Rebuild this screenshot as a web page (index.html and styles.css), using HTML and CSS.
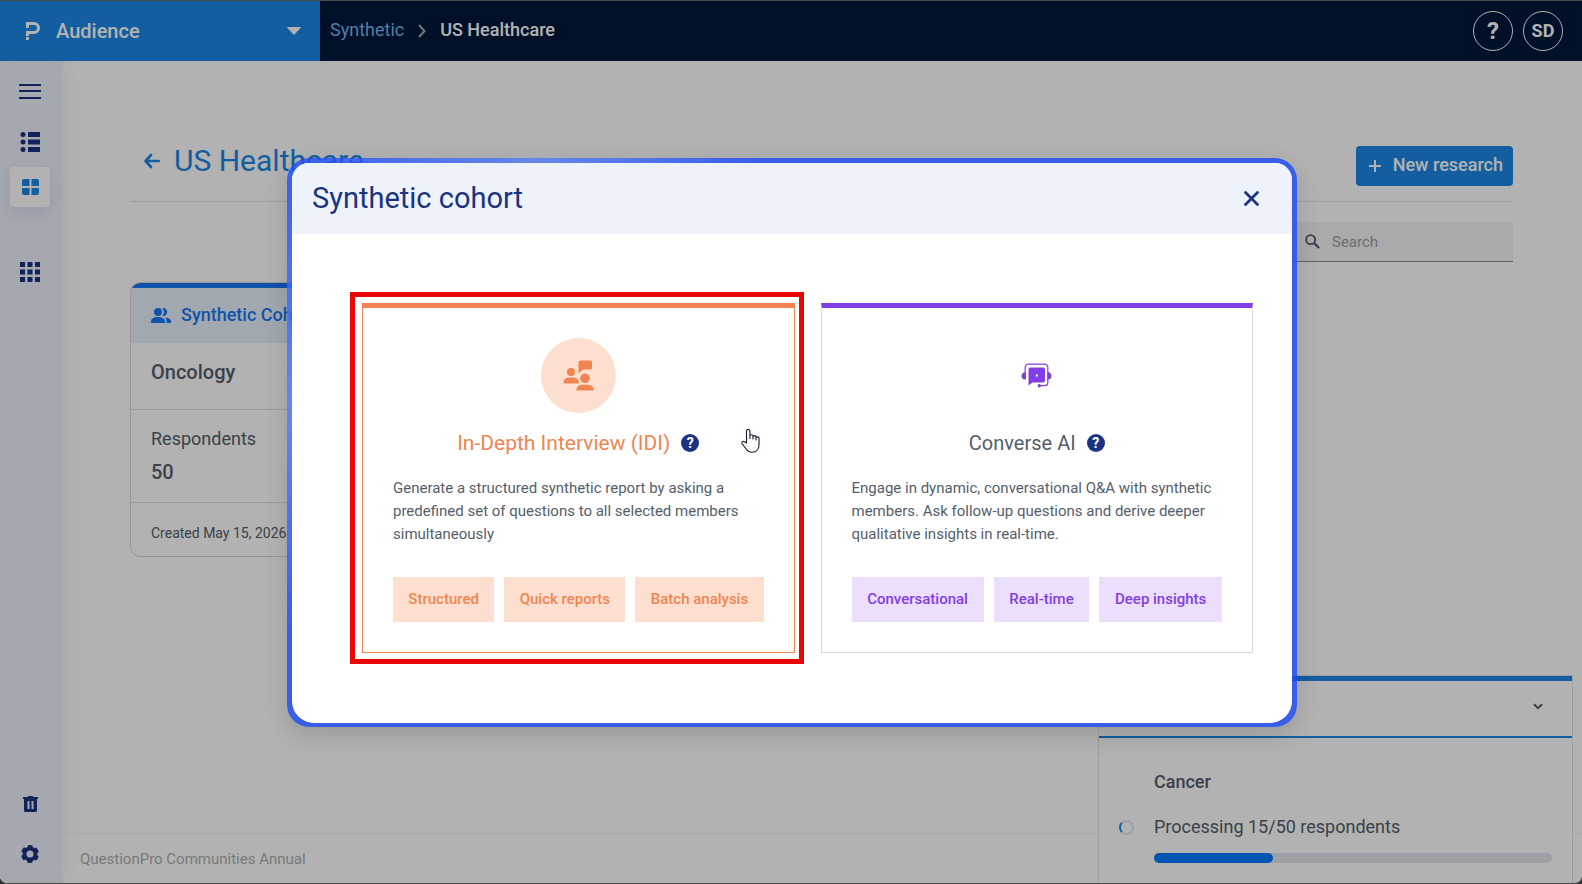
FILE: index.html
```html
<!DOCTYPE html>
<html lang="en">
<head>
<meta charset="utf-8">
<meta name="viewport" content="width=device-width, initial-scale=1">
<title>US Healthcare - Synthetic cohort</title>
<link rel="stylesheet" href="styles.css">
</head>
<body>
<div class="app">
  <header class="topbar">
    <button class="product" type="button">
      <svg class="product-logo" viewBox="0 0 14 18" width="14" height="18" aria-hidden="true">
        <path d="M0 1.500H8a4.500 4.500 0 0 1 0 9H1.500V14" fill="none" stroke="currentColor" stroke-width="3"/>
        <rect x="0" y="15" width="3" height="3" fill="currentColor"/>
        <rect x="0" y="3" width="3" height="3" fill="currentColor"/>
      </svg>
      <span class="product-name">Audience</span>
      <svg viewBox="0 0 14 8" width="14" height="8" aria-hidden="true"><path d="M0.500 0.500H13.500L7 7.500Z" fill="currentColor" stroke="currentColor" stroke-linejoin="round"/></svg>
    </button>
    <nav class="crumbs" aria-label="Breadcrumb">
      <a class="crumb-link" href="#">Synthetic</a>
      <svg viewBox="0 0 8 14" width="8" height="14" aria-hidden="true"><path d="M1 1L6.500 7L1 13" fill="none" stroke="#a8a8a8" stroke-width="2"/></svg>
      <span class="crumb-current">US Healthcare</span>
    </nav>
    <div class="account">
      <button class="round round-help" type="button" aria-label="Help">?</button>
      <button class="round" type="button">SD</button>
    </div>
  </header>

  <div class="shell">
    <nav class="sidebar" aria-label="Main">
      <button class="side-item" type="button" aria-label="Menu">
        <svg viewBox="0 0 22 15" width="22" height="15"><path d="M0 0H22V2H0ZM0 6H22V8H0ZM0 13H22V15H0Z" fill="currentColor"/></svg>
      </button>
      <button class="side-item side-list" type="button" aria-label="List">
        <svg viewBox="0 0 20 20" width="20" height="20" fill="currentColor"><circle cx="3" cy="2.500" r="2.500"/><circle cx="3" cy="10" r="2.500"/><circle cx="3" cy="17.500" r="2.500"/><path d="M8 0H20V5H8ZM8 7.500H20V12.500H8ZM8 15H20V20H8Z"/></svg>
      </button>
      <button class="side-item side-active" type="button" aria-label="Dashboard">
        <svg viewBox="0 0 17 16" width="17" height="16" fill="currentColor"><path d="M2 0H7.500V7H0V2A2 2 0 0 1 2 0ZM9.500 0H15A2 2 0 0 1 17 2V7H9.500ZM0 9H7.500V16H2A2 2 0 0 1 0 14ZM9.500 9H17V14A2 2 0 0 1 15 16H9.500Z"/></svg>
      </button>
      <button class="side-item side-apps" type="button" aria-label="Apps">
        <svg viewBox="0 0 20 20" width="20" height="20" fill="currentColor"><path d="M0 0H5V5H0ZM7.500 0H12.500V5H7.500ZM15 0H20V5H15ZM0 7.500H5V12.500H0ZM7.500 7.500H12.500V12.500H7.500ZM15 7.500H20V12.500H15ZM0 15H5V20H0ZM7.500 15H12.500V20H7.500ZM15 15H20V20H15Z"/></svg>
      </button>
      <button class="side-item side-trash" type="button" aria-label="Trash">
        <svg viewBox="0 0 15 16" width="15" height="16" fill="currentColor"><path fill-rule="evenodd" d="M0 1H4.500L5.500 0H9.500L10.500 1H15V3H14V14.500A1.500 1.500 0 0 1 12.500 16H2.500A1.500 1.500 0 0 1 1 14.500V3H0ZM4.500 5V13H6.500V5ZM8.500 5V13H10.500V5Z"/></svg>
      </button>
      <button class="side-item side-settings" type="button" aria-label="Settings">
        <svg viewBox="0 0 18 18" width="18" height="18"><circle cx="9" cy="9" r="5.500" fill="none" stroke="currentColor" stroke-width="4"/><circle cx="9" cy="9" r="7.200" fill="none" stroke="currentColor" stroke-width="3.600" stroke-dasharray="4.500 3.040" stroke-dashoffset="2.250" transform="rotate(-90 9 9)"/></svg>
      </button>
    </nav>

    <div class="page">
      <main class="content">
        <div class="title-row">
          <button class="back" type="button" aria-label="Back">
            <svg viewBox="0 0 18 16" width="18" height="16"><path d="M16 8H3M8 2L2.500 8L8 14" fill="none" stroke="currentColor" stroke-width="2.600" stroke-linecap="round" stroke-linejoin="round"/></svg>
          </button>
          <h1 class="title">US Healthcare</h1>
          <button class="new-btn" type="button">
            <svg viewBox="0 0 12 12" width="12" height="12" aria-hidden="true"><path d="M6 0V12M0 6H12" stroke="currentColor" stroke-width="2"/></svg>
            <span class="new-label">New research</span>
          </button>
        </div>
        <div class="toolbar">
          <label class="search">
            <svg viewBox="0 0 16 16" width="15" height="15" aria-hidden="true"><circle cx="6" cy="6" r="4.800" fill="none" stroke="currentColor" stroke-width="2"/><path d="M9.500 9.500L15 15" stroke="currentColor" stroke-width="2.400"/></svg>
            <input class="search-input" type="search" placeholder="Search" aria-label="Search">
          </label>
        </div>
        <article class="cohort">
          <div class="cohort-head">
            <svg viewBox="0 0 20 15" width="20" height="15" fill="currentColor" aria-hidden="true"><circle cx="7" cy="4" r="4"/><path d="M0 13.500C0 10.500 3 9 7 9S14 10.500 14 13.500V15H0ZM11.300 0.100A4 4 0 1 1 11.300 7.900A6 6 0 0 0 11.300 0.100ZM15.500 15V13.500C15.500 11.700 15 10.500 14 9.500C17.500 9.700 20 11 20 13.500V15Z"/></svg>
            <span class="cohort-type">Synthetic Cohort</span>
          </div>
          <h2 class="cohort-name">Oncology</h2>
          <div class="cohort-stat">
            <span class="stat-label">Respondents</span>
            <strong class="stat-value">50</strong>
          </div>
          <div class="cohort-date">Created May 15, 2026</div>
        </article>
      </main>
      <footer class="footer">QuestionPro Communities Annual</footer>
    </div>
  </div>

  <aside class="jobs" aria-label="Progress">
    <div class="jobs-head">
      <button class="jobs-toggle" type="button" aria-label="Collapse">
        <svg viewBox="0 0 10 7" width="10" height="7"><path d="M1 1.200L5 5.200L9 1.200" fill="none" stroke="currentColor" stroke-width="2"/></svg>
      </button>
    </div>
    <div class="jobs-body">
      <div class="job-name">Cancer</div>
      <span class="spinner"></span>
      <div class="job-state">Processing 15/50 respondents</div>
      <div class="bar"><div class="bar-fill" style="width:30%"></div></div>
    </div>
  </aside>

  <div class="overlay">
    <section class="frame" role="dialog" aria-modal="true" aria-labelledby="dialog-title">
      <div class="dialog">
        <header class="dialog-head">
          <h2 class="dialog-title" id="dialog-title">Synthetic cohort</h2>
          <button class="close" type="button" aria-label="Close">
            <svg viewBox="0 0 15 15" width="15" height="15"><path d="M1.500 1.500L13.500 13.500M13.500 1.500L1.500 13.500" stroke="currentColor" stroke-width="2.800" stroke-linecap="round"/></svg>
          </button>
        </header>
        <div class="choices">
          <article class="choice choice-orange">
            <div class="choice-icon">
              <svg viewBox="0 0 31 31" width="31" height="31" fill="currentColor" aria-hidden="true"><circle cx="8" cy="12" r="4"/><path d="M0.500 23.500V22C1 19 3.500 17.500 6 17.500H10.500C13 17.500 15.500 19 15.800 22V23.500ZM17 0.500H27.500A1.500 1.500 0 0 1 29 2V8A1.500 1.500 0 0 1 27.500 9.500H20L15.500 13.500V2A1.500 1.500 0 0 1 17 0.500ZM13.500 30.500V29C14 26.500 16.500 24.700 19 24.700H25C27.500 24.700 30 26.500 30.700 29V30.500Z"/><circle cx="22" cy="18.300" r="4.800"/></svg>
            </div>
            <div class="choice-title"><h3 class="choice-name">In-Depth Interview (IDI)</h3><button class="tip" type="button" aria-label="About In-Depth Interview">?</button></div>
            <p class="choice-text">Generate a structured synthetic report by asking a predefined set of questions to all selected members simultaneously</p>
            <ul class="tags"><li class="tag">Structured</li><li class="tag">Quick reports</li><li class="tag">Batch analysis</li></ul>
            <span class="marker"></span>
            <svg class="pointer" viewBox="0 0 19 24" width="19" height="24" aria-hidden="true"><path d="M5.500 14V2.200A1.700 1.700 0 0 1 8.900 2.200V9.500V6.800A1.600 1.600 0 0 1 12 7V10V8A1.500 1.500 0 0 1 15 8.200V11V9.200A1.500 1.500 0 0 1 18 9.500V16C18 20 15.500 23.200 11 23.200C7.500 23.200 5.500 21 4 18.500L1.300 15C0 13 2 11.500 3.500 12.700Z" fill="#fff" stroke="#14142b" stroke-width="1.100" stroke-linejoin="round"/></svg>
          </article>
          <article class="choice choice-violet">
            <div class="choice-icon">
              <svg viewBox="0 0 31 25" width="31" height="25" fill="currentColor" aria-hidden="true"><path d="M4.200 9V4.500A3.200 3.200 0 0 1 7.500 1.200H23.500A3.200 3.200 0 0 1 26.800 4.500V19.500A3 3 0 0 1 24 22.600H18" fill="none" stroke="currentColor" stroke-width="1.200"/><path d="M5 9V16.500C2 17 0.500 15 0.500 13S2 9 5 9ZM26.500 9V16.500C29 17 30.500 15 30.500 13S29 9 26.500 9Z"/><path fill-rule="evenodd" d="M9.500 4.500H22A2 2 0 0 1 24 6.500V17.500A2 2 0 0 1 22 19.500H11.500L7.500 22.500V6.500A2 2 0 0 1 9.500 4.500ZM14.800 11.500V13.500H16.800V11.500Z"/><circle cx="18.300" cy="22.800" r="1.700"/></svg>
            </div>
            <div class="choice-title"><h3 class="choice-name">Converse AI</h3><button class="tip" type="button" aria-label="About Converse AI">?</button></div>
            <p class="choice-text">Engage in dynamic, conversational Q&amp;A with synthetic members. Ask follow-up questions and derive deeper qualitative insights in real-time.</p>
            <ul class="tags"><li class="tag">Conversational</li><li class="tag">Real-time</li><li class="tag">Deep insights</li></ul>
          </article>
        </div>
      </div>
    </section>
  </div>
</div>
</body>
</html>
```

FILE: styles.css
```css
* { box-sizing: border-box; }

html, body { height: 100%; }

body {
  margin: 0;
  background: #34353a;
  color: #545e6b;
  font-family: Roboto, "Open Sans", sans-serif;
  font-size: 15px;
}

button { margin: 0; padding: 0; border: 0; background: none; color: inherit; font: inherit; }
h1, h2, h3, p, ul { margin: 0; padding: 0; font-weight: 400; }
svg { display: block; flex: none; }

.app {
  position: relative;
  display: flex;
  flex-direction: column;
  height: 100vh;
  border: solid #47494a;
  border-width: 1px 0;
  border-radius: 0 0 8px 8px;
  background: #fff;
  overflow: hidden;
}

/* Top bar */
.topbar { display: flex; flex: none; height: 60px; background: #00173c; color: #fff; }
.product { display: flex; align-items: center; width: 320px; padding: 0 19px 0 26px; background: #1b87e6; text-align: left; }
.product-name { flex: 1; padding-left: 16px; font-size: 20px; font-weight: 500; }
.crumbs { display: flex; flex: 1; align-items: center; gap: 14px; padding-left: 10px; font-size: 18px; }
.crumb-link { padding-bottom: 3px; color: #76b4ec; text-decoration: none; }
.crumb-current { padding-bottom: 3px; font-weight: 500; }
.account { display: flex; align-items: center; gap: 10px; padding-right: 19px; }
.round { width: 40px; height: 40px; padding-bottom: 2px; border: 1px solid #fff; border-radius: 50%; font-size: 18px; font-weight: 700; }
.round-help { padding-bottom: 0; font-size: 24px; }

/* Sidebar */
.shell { display: flex; flex: 1; min-height: 0; }
.sidebar {
  display: flex;
  flex: none;
  flex-direction: column;
  width: 63px;
  padding: 10px 13px 9px 10px;
  background: #edf2fb;
  box-shadow: 0 0 20px rgba(0, 0, 0, .06);
  color: #1b3380;
}
.side-item { display: grid; place-items: center; width: 40px; height: 40px; border-radius: 3px; }
.side-list { margin: 11px 0 5px; }
.side-active { background: #fff; box-shadow: 0 5px 20px rgba(27, 51, 128, .12); color: #1b87e6; }
.side-apps { margin-top: 45px; }
.side-trash { margin-top: auto; }
.side-settings { margin-top: 10px; }

/* Page */
.page { display: flex; flex: 1; flex-direction: column; min-width: 0; }
.content { flex: 1; padding: 85px 69px 0 67px; }
.title-row { display: flex; align-items: flex-start; padding-bottom: 15px; border-bottom: 1px solid #e2e2e2; }
.back { display: flex; align-items: center; height: 30px; padding-left: 13px; color: #1b87e6; }
.title { flex: 1; padding-left: 13px; color: #1b87e6; font-size: 30px; line-height: 30px; }
.new-btn { display: flex; align-items: center; gap: 12px; height: 40px; padding: 0 10px 0 13px; border-radius: 4px; background: #1b87e6; color: #fff; font-size: 18px; font-weight: 500; }
.new-label { padding-bottom: 3px; }
.toolbar { display: flex; justify-content: flex-end; padding: 20px 0; }
.search { display: flex; align-items: center; gap: 12px; width: 240px; height: 40px; padding-left: 32px; border-bottom: 1px solid #8e8e8e; background: #f4f4f4; }
.search-input { width: 100%; border: 0; padding: 0; background: none; font: inherit; outline: 0; }
.search-input::placeholder { color: #9b9ea6; opacity: 1; }

.cohort { width: 300px; border: 1px solid #d8d8d8; border-radius: 10px; overflow: hidden; }
.cohort-head { display: flex; align-items: center; gap: 10px; height: 60px; padding: 0 20px; border-top: 5px solid #1878f4; background: #e8f1fd; color: #1878f4; font-size: 18px; font-weight: 500; }
.cohort-type { padding-bottom: 2px; }
.cohort-name { padding: 17px 20px 25px; font-size: 20px; font-weight: 500; line-height: 24px; }
.cohort-stat { display: flex; flex-direction: column; gap: 9px; padding: 17px 20px 18px; border: solid #dcdcdc; border-width: 1px 0; }
.stat-label { font-size: 18px; line-height: 24px; }
.stat-value { font-size: 20px; font-weight: 500; line-height: 24px; }
.cohort-date { padding: 18px 20px 11px; font-size: 14px; line-height: 24px; }

.footer { height: 50px; padding: 0 17px; border-top: 1px solid #f1f1f1; color: #aeaeae; font-size: 15px; line-height: 50px; }

/* Floating progress panel */
.jobs { position: absolute; right: 9px; bottom: 0; width: 475px; border: 1px solid #e2e4ee; border-bottom: 0; background: #fff; }
.jobs-head { display: flex; align-items: center; justify-content: flex-end; height: 62px; padding: 0 29px 5px 0; border: solid #1b87e6; border-width: 5px 0 2px; }
.jobs-body { display: grid; grid-template-columns: 15px 1fr; column-gap: 20px; align-items: center; padding: 32px 20px 20px; font-size: 18px; line-height: 24px; }
.job-name { grid-column: 2; margin-bottom: 21px; font-weight: 500; }
.spinner { width: 15px; height: 15px; border: 2px solid #e4e5ec; border-left-color: #1b87e6; border-radius: 50%; }
.bar { grid-column: 2; height: 10px; margin-top: 14px; border-radius: 5px; background: #e4e5ec; }
.bar-fill { height: 10px; border-radius: 5px; background: #007bff; }

/* Dialog */
.overlay { position: absolute; inset: 0; display: flex; align-items: center; justify-content: center; padding-left: 2px; background: rgba(0, 0, 0, .3); }
.frame {
  width: 1010px;
  max-width: 100%;
  padding: 5px 5px 4px;
  border-radius: 22px;
  background: linear-gradient(135deg, rgba(30, 75, 245, .82), rgba(85, 125, 245, .82) 16%, rgba(30, 75, 245, .82) 30%);
  box-shadow: 0 8px 24px rgba(0, 0, 0, .14);
}
.dialog { border-radius: 17px 17px 22px 22px; background: #fff; overflow: hidden; }
.dialog-head { display: flex; align-items: center; justify-content: space-between; height: 71px; padding: 0 33px 0 20px; background: #edf2fb; color: #1b3380; }
.dialog-title { font-size: 29px; }
.choices { display: grid; grid-template-columns: 1fr 1fr; gap: 26px; padding: 69px 39px 70px 70px; }
.choice { position: relative; padding: 30px; border: 1px solid #d8d8da; border-top: 5px solid; }
.choice-orange { border-color: #f08552; }
.choice-violet { border-top-color: #823ee6; }
.choice-icon { display: grid; place-items: center; width: 75px; height: 75px; margin: 0 auto 18px; border-radius: 50%; }
.choice-orange .choice-icon { background: #fcdfcf; color: #f08552; }
.choice-violet .choice-icon { color: #823ee6; }
.choice-title { display: flex; align-items: center; justify-content: center; gap: 11px; }
.choice-name { font-size: 21px; line-height: 24px; }
.choice-violet .choice-name { font-size: 20px; }
.choice-orange .choice-name { color: #f08552; }
.tip { width: 18px; height: 18px; border-radius: 50%; background: #1b3380; color: #fff; font-size: 14px; font-weight: 700; line-height: 18px; }
.choice-text { margin: 22px 0 31px; line-height: 23px; }
.tags { display: flex; gap: 10px; list-style: none; }
.tag { flex: auto; font-weight: 500; line-height: 45px; text-align: center; white-space: nowrap; }
.choice-orange .tag { background: #fcdfcf; color: #f08552; }
.choice-violet .tag { background: #ecdffe; color: #823ee6; }

/* Highlight and pointer drawn over the first choice */
.marker { position: absolute; inset: -16px -10px -12px -13px; border: 5px solid #ea0606; pointer-events: none; }
.pointer { position: absolute; top: 121px; right: 34px; }
```
